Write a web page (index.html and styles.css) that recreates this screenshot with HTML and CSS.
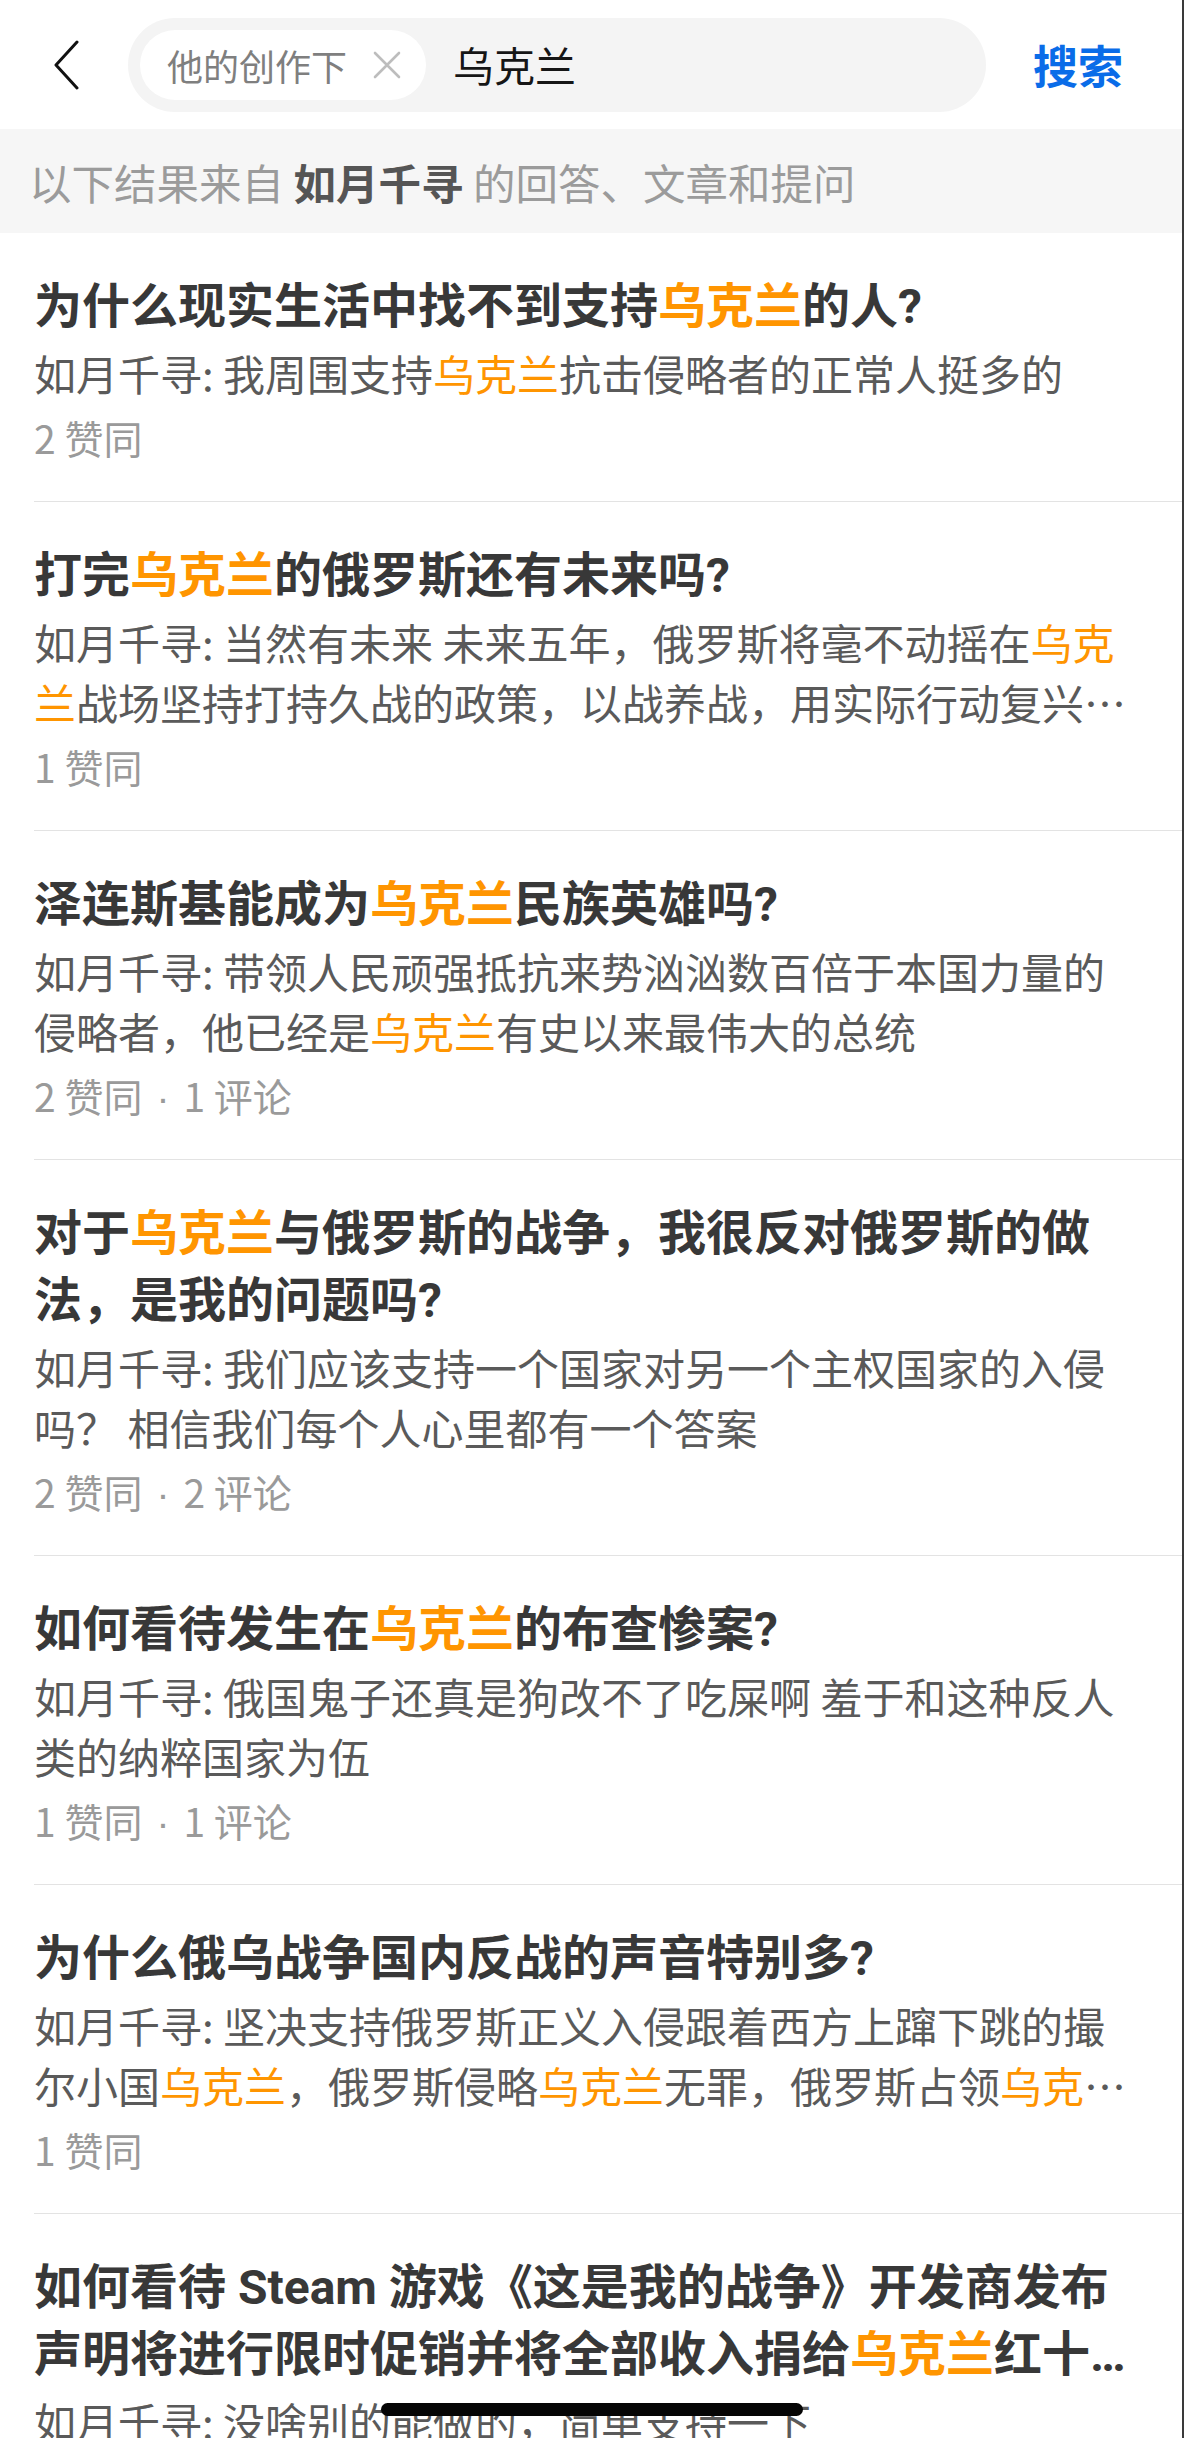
FILE: index.html
```html
<!DOCTYPE html>
<html lang="zh-CN">
<head>
<meta charset="utf-8">
<title>搜索 乌克兰</title>
<link rel="stylesheet" href="styles.css">
</head>
<body>
<div class="page">
  <header class="topbar">
    <span class="back">
      <svg viewBox="0 0 26 50" width="26" height="50"><polyline points="23,2 2,25 23,48" fill="none" stroke="#111" stroke-width="3" stroke-linecap="round" stroke-linejoin="round"/></svg>
    </span>
    <div class="search">
      <span class="chip">他的创作下<svg class="chip-x" viewBox="0 0 28 28" width="28" height="28"><path d="M2 2 L26 26 M26 2 L2 26" stroke="#bdbdbd" stroke-width="2.6" stroke-linecap="round"/></svg></span>
      <span class="query">乌克兰</span>
    </div>
    <span class="submit">搜索</span>
  </header>

  <div class="scope">以下结果来自 <b>如月千寻</b> 的回答、文章和提问</div>

  <ul class="results">
    <li class="item">
      <h2 class="title">为什么现实生活中找不到支持<em>乌克兰</em>的人?</h2>
      <p class="snippet">如月千寻: 我周围支持<em>乌克兰</em>抗击侵略者的正常人挺多的</p>
      <div class="meta">2 赞同</div>
    </li>
    <li class="item">
      <h2 class="title">打完<em>乌克兰</em>的俄罗斯还有未来吗?</h2>
      <p class="snippet">如月千寻: 当然有未来 未来五年，俄罗斯将毫不动摇在<em>乌克兰</em>战场坚持打持久战的政策，以战养战，用实际行动复兴俄罗斯的伟大</p>
      <div class="meta">1 赞同</div>
    </li>
    <li class="item">
      <h2 class="title">泽连斯基能成为<em>乌克兰</em>民族英雄吗?</h2>
      <p class="snippet">如月千寻: 带领人民顽强抵抗来势汹汹数百倍于本国力量的侵略者，他已经是<em>乌克兰</em>有史以来最伟大的总统</p>
      <div class="meta">2 赞同<span class="sep">·</span>1 评论</div>
    </li>
    <li class="item">
      <h2 class="title">对于<em>乌克兰</em>与俄罗斯的战争，我很反对俄罗斯的做法，是我的问题吗?</h2>
      <p class="snippet">如月千寻: 我们应该支持一个国家对另一个主权国家的入侵吗？ 相信我们每个人心里都有一个答案</p>
      <div class="meta">2 赞同<span class="sep">·</span>2 评论</div>
    </li>
    <li class="item">
      <h2 class="title">如何看待发生在<em>乌克兰</em>的布查惨案?</h2>
      <p class="snippet">如月千寻: 俄国鬼子还真是狗改不了吃屎啊 羞于和这种反人类的纳粹国家为伍</p>
      <div class="meta">1 赞同<span class="sep">·</span>1 评论</div>
    </li>
    <li class="item">
      <h2 class="title">为什么俄乌战争国内反战的声音特别多?</h2>
      <p class="snippet">如月千寻: 坚决支持俄罗斯正义入侵跟着西方上蹿下跳的撮尔小国<em>乌克兰</em>，俄罗斯侵略<em>乌克兰</em>无罪，俄罗斯占领<em>乌克兰</em>有理</p>
      <div class="meta">1 赞同</div>
    </li>
    <li class="item">
      <h2 class="title">如何看待 Steam 游戏《这是我的战争》开发商发布声明将进行限时促销并将全部收入捐给<em>乌克兰</em>红十字会?</h2>
      <p class="snippet">如月千寻: 没啥别的能做的，简单支持一下</p>
      <div class="meta">3 赞同</div>
    </li>
  </ul>

  <div class="home-indicator"></div>
</div>
</body>
</html>
```

FILE: styles.css
```css
* {
  box-sizing: border-box;
}

html, body {
  margin: 0;
  padding: 0;
  background: #ffffff;
}

body {
  font-family: "Noto Sans CJK SC", "Noto Sans", "Liberation Sans", sans-serif;
  color: #333333;
}

.page {
  width: 1184px;
  height: 2438px;
  overflow: hidden;
  border-right: 2px solid #3a3a3a;
  position: relative;
  background: #ffffff;
}

/* ---------- top bar ---------- */
.topbar {
  display: flex;
  align-items: center;
  height: 129px;
  padding: 0 59px 0 54px;
}

.back {
  display: flex;
  width: 26px;
  height: 50px;
  margin-right: 48px;
}

.search {
  flex: 1;
  display: flex;
  align-items: center;
  height: 94px;
  margin-right: 47px;
  padding-left: 12px;
  border-radius: 47px;
  background: #f4f4f4;
}

.chip {
  display: flex;
  align-items: center;
  gap: 26px;
  height: 70px;
  padding: 0 25px 0 27px;
  border-radius: 35px;
  background: #ffffff;
  color: #7f7f7f;
  font-size: 36px;
  line-height: 1;
}

.chip-x {
  display: block;
  flex: none;
}

.query {
  margin-left: 27px;
  font-size: 41px;
  color: #161616;
  line-height: 1;
}

.submit {
  flex: none;
  width: 90px;
  font-size: 45px;
  font-weight: 700;
  color: #0a6ce8;
  line-height: 1;
  white-space: nowrap;
}

/* ---------- scope banner ---------- */
.scope {
  display: flex;
  align-items: center;
  height: 104px;
  padding-left: 29px;
  background: #f6f6f6;
  color: #9b9b9b;
  font-size: 42.5px;
  white-space: pre;
}

.scope b {
  color: #555555;
  font-weight: 700;
}

/* ---------- results ---------- */
.results {
  list-style: none;
  margin: 0;
  padding: 0;
}

.item {
  margin-left: 34px;
  padding: 40px 50px 40px 0;
  border-bottom: 1px solid #e3e3e3;
}

.title {
  margin: 0;
  font-family: Roboto, "Noto Sans CJK SC", sans-serif;
  font-size: 48px;
  font-weight: 700;
  line-height: 67px;
  max-height: 134px;
  color: #383838;
  display: -webkit-box;
  -webkit-box-orient: vertical;
  -webkit-line-clamp: 2;
  overflow: hidden;
}

.snippet {
  margin: 3px 0 0;
  font-size: 42px;
  line-height: 60px;
  color: #5a5a5a;
  display: -webkit-box;
  -webkit-box-orient: vertical;
  -webkit-line-clamp: 2;
  overflow: hidden;
}

em {
  font-style: normal;
  color: #ff9500;
}

.meta {
  margin-top: 10px;
  height: 48px;
  font-size: 39px;
  line-height: 48px;
  color: #9a9a9a;
}

.sep {
  font-family: "Liberation Sans", sans-serif;
  line-height: 0;
  margin: 0 14px;
}

/* ---------- home indicator ---------- */
.home-indicator {
  position: absolute;
  left: 381px;
  top: 2403px;
  width: 422px;
  height: 13px;
  border-radius: 7px;
  background: #050505;
}
```
